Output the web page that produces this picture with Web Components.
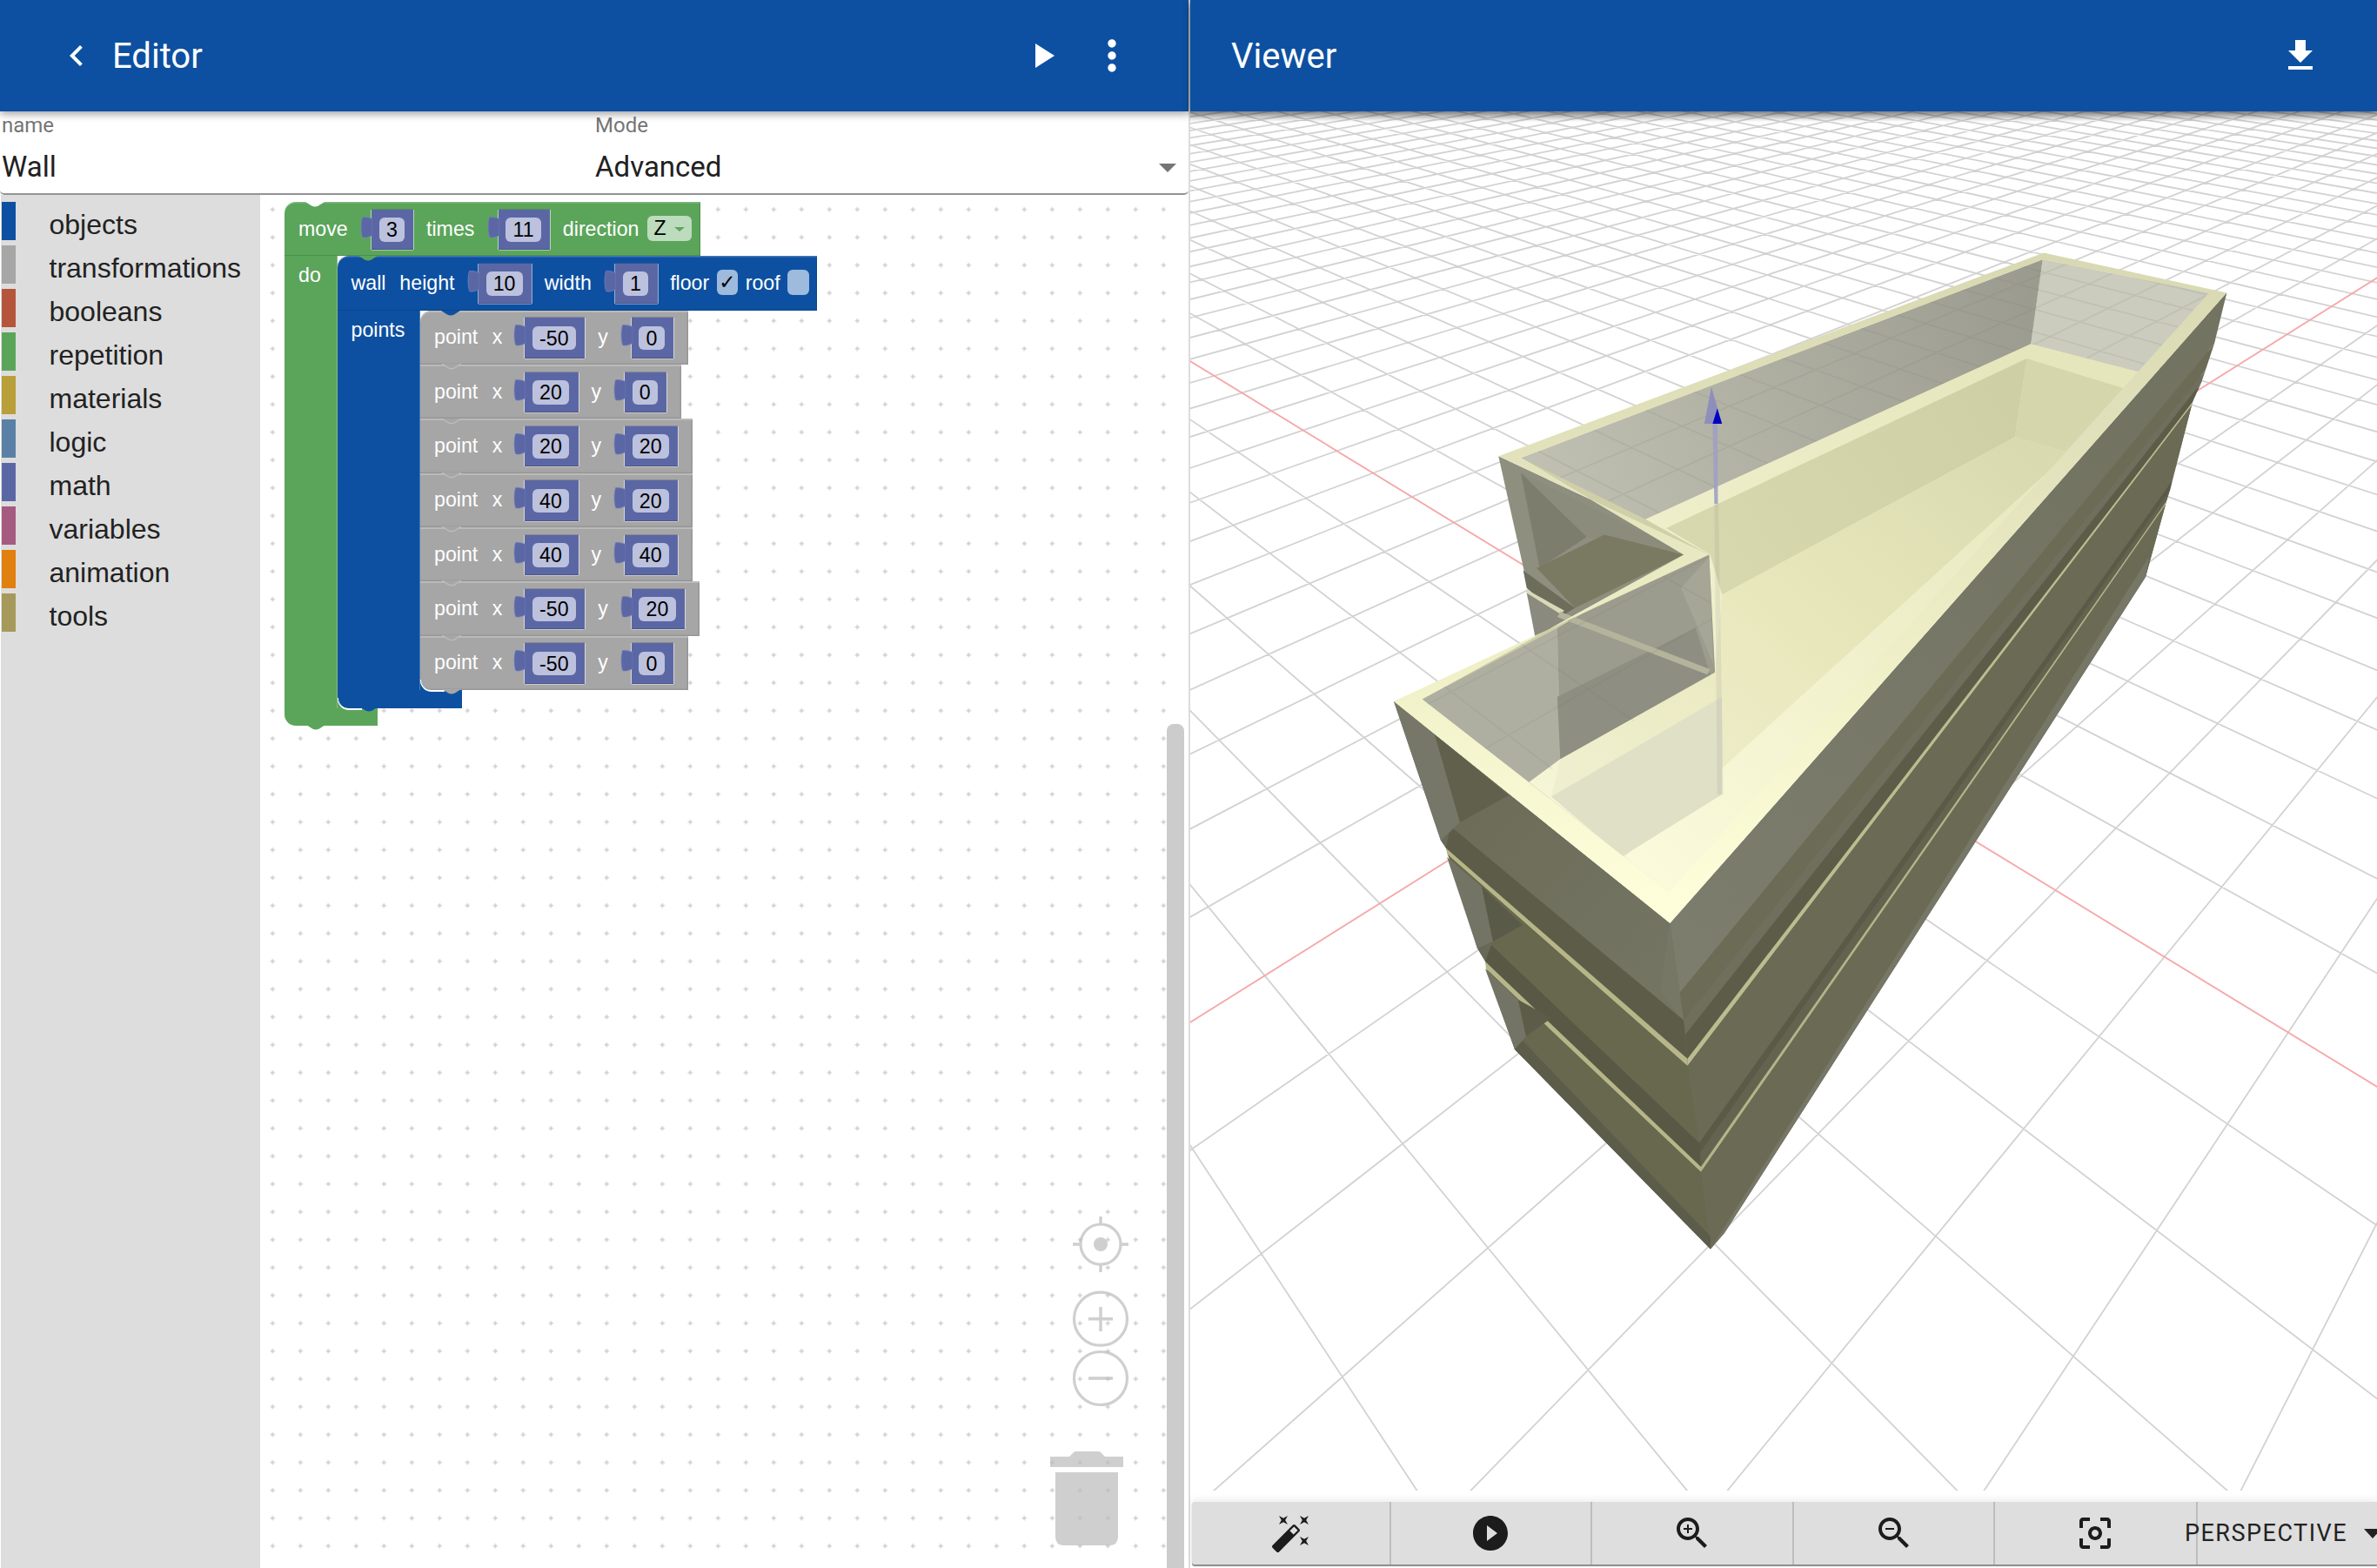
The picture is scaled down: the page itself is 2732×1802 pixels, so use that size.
<!DOCTYPE html>
<html lang="en">
<head>
<meta charset="utf-8">
<title>Editor / Viewer</title>
<style>
html,body{margin:0;padding:0;background:#fff;overflow:hidden}
body{width:2732px;height:1802px;font-family:Roboto,"Liberation Sans",sans-serif}
</style>
</head>
<body>
<app-shell>
  <editor-panel slot="left">
    <app-bar pad-left="64" pad-right="60">
      <ui-icon slot="lead" name="back" color="#fff" style="margin-right:17px"></ui-icon>
      Editor
      <ui-icon slot="actions" name="play" color="#fff" style="margin-right:28px"></ui-icon>
      <ui-icon slot="actions" name="more" size="56" color="#fff"></ui-icon>
    </app-bar>
    <form-bar>
      <form-field label="name" value="Wall"></form-field>
      <form-field label="Mode" value="Advanced" select></form-field>
    </form-bar>
    <work-area>
      <bk-toolbox slot="toolbox">
        <bk-cat color="#0d50a1">objects</bk-cat>
        <bk-cat color="#a6a6a6">transformations</bk-cat>
        <bk-cat color="#b5563c">booleans</bk-cat>
        <bk-cat color="#5ba55b">repetition</bk-cat>
        <bk-cat color="#b89f3a">materials</bk-cat>
        <bk-cat color="#5b80a5">logic</bk-cat>
        <bk-cat color="#5b67a5">math</bk-cat>
        <bk-cat color="#a55b80">variables</bk-cat>
        <bk-cat color="#e0800f">animation</bk-cat>
        <bk-cat color="#a59a5b">tools</bk-cat>
      </bk-toolbox>
      <bk-workspace slot="canvas">
        <bk-block color="#5ba55b" notch="#ffffff" labelw="60.5" footw="107" label="do" rounded>
          <bk-text slot="head">move</bk-text><bk-value slot="head">3</bk-value>
          <bk-text slot="head">times</bk-text><bk-value slot="head">11</bk-value>
          <bk-text slot="head">direction</bk-text><bk-drop slot="head">Z</bk-drop>
          <bk-block color="#0d50a1" notch="#5ba55b" labelw="95.5" footw="143.5" label="points" pad-right="9" rounded>
            <bk-text slot="head">wall</bk-text><bk-text slot="head" style="margin-left:1.4px">height</bk-text><bk-value slot="head">10</bk-value>
            <bk-text slot="head">width</bk-text><bk-value slot="head">1</bk-value>
            <bk-text slot="head">floor</bk-text><bk-check slot="head" checked></bk-check>
            <bk-text slot="head" style="margin-left:-6px">roof</bk-text><bk-check slot="head"></bk-check>
            <bk-point x="-50" y="0" notch="#0d50a1" first></bk-point>
            <bk-point x="20" y="0"></bk-point>
            <bk-point x="20" y="20"></bk-point>
            <bk-point x="40" y="20"></bk-point>
            <bk-point x="40" y="40"></bk-point>
            <bk-point x="-50" y="20"></bk-point>
            <bk-point x="-50" y="0" last></bk-point>
          </bk-block>
        </bk-block>
      </bk-workspace>
    </work-area>
  </editor-panel>
  <viewer-panel slot="right">
    <app-bar pad-left="47" pad-right="64">
      Viewer
      <ui-icon slot="actions" name="download" color="#fff"></ui-icon>
    </app-bar>
    <scene-view></scene-view>
    <view-toolbar>
      <ui-icon name="wand" color="#1c1c1c"></ui-icon>
      <ui-icon name="playc" color="#1c1c1c"></ui-icon>
      <ui-icon name="zoomin" color="#1c1c1c"></ui-icon>
      <ui-icon name="zoomout" color="#1c1c1c"></ui-icon>
      <ui-icon name="focus" color="#1c1c1c"></ui-icon>
      <span slot="select">PERSPECTIVE</span>
    </view-toolbar>
  </viewer-panel>
</app-shell>

<script>
const ICONS={
 back:'M15.41 7.41L14 6l-6 6 6 6 1.41-1.41L10.83 12z',
 play:'M8 5v14l11-7z',
 more:'M12 8c1.1 0 2-.9 2-2s-.9-2-2-2-2 .9-2 2 .9 2 2 2zm0 2c-1.1 0-2 .9-2 2s.9 2 2 2 2-.9 2-2-.9-2-2-2zm0 6c-1.1 0-2 .9-2 2s.9 2 2 2 2-.9 2-2-.9-2-2-2z',
 download:'M19 9h-4V3H9v6H5l7 7 7-7zM5 18v2h14v-2H5z',
 wand:'M7.5 5.6L10 7 8.6 4.5 10 2 7.5 3.4 5 2l1.4 2.5L5 7zm12 9.8L17 14l1.4 2.5L17 19l2.5-1.4L22 19l-1.4-2.5L22 14zM22 2l-2.5 1.4L17 2l1.4 2.5L17 7l2.5-1.4L22 7l-1.4-2.5zm-7.63 5.29c-.39-.39-1.02-.39-1.41 0L1.29 18.96c-.39.39-.39 1.02 0 1.41l2.34 2.34c.39.39 1.02.39 1.41 0L16.7 11.05c.39-.39.39-1.02 0-1.41l-2.33-2.35zm-1.03 5.49l-2.12-2.12 2.44-2.44 2.12 2.12-2.44 2.44z',
 playc:'M12 2C6.48 2 2 6.48 2 12s4.48 10 10 10 10-4.48 10-10S17.52 2 12 2zm-2 14.5v-9l6 4.5-6 4.5z',
 zoomin:'M15.5 14h-.79l-.28-.27C15.41 12.59 16 11.11 16 9.5 16 5.91 13.09 3 9.5 3S3 5.91 3 9.5 5.91 16 9.5 16c1.61 0 3.09-.59 4.23-1.57l.27.28v.79l5 4.99L20.49 19l-4.99-5zm-6 0C7.01 14 5 11.99 5 9.5S7.01 5 9.5 5 14 7.01 14 9.5 11.99 14 9.5 14zM12 10h-2v2H9v-2H7V9h2V7h1v2h2v1z',
 zoomout:'M15.5 14h-.79l-.28-.27C15.41 12.59 16 11.11 16 9.5 16 5.91 13.09 3 9.5 3S3 5.91 3 9.5 5.91 16 9.5 16c1.61 0 3.09-.59 4.23-1.57l.27.28v.79l5 4.99L20.49 19l-4.99-5zm-6 0C7.01 14 5 11.99 5 9.5S7.01 5 9.5 5 14 7.01 14 9.5 11.99 14 9.5 14zM7 9h5v1H7z',
 focus:'M5 15H3v4c0 1.1.9 2 2 2h4v-2H5v-4zM5 5h4V3H5c-1.1 0-2 .9-2 2v4h2V5zm14-2h-4v2h4v4h2V5c0-1.1-.9-2-2-2zm0 16h-4v2h4c1.1 0 2-.9 2-2v-4h-2v4zM12 8c-2.21 0-4 1.79-4 4s1.79 4 4 4 4-1.79 4-4-1.79-4-4-4zm0 6c-1.1 0-2-.9-2-2s.9-2 2-2 2 .9 2 2-.9 2-2 2z'
};
const def=(name,html,extra)=>{
  customElements.define(name,class extends HTMLElement{
    constructor(){super();this.attachShadow({mode:'open'});}
    connectedCallback(){
      const h=typeof html==='function'?html(this):html;
      this.shadowRoot.innerHTML=h;
      if(extra)extra(this);
    }
  });
};
const A=(el,n,d='')=>el.hasAttribute(n)?el.getAttribute(n):d;
const BF='"Liberation Sans",Arial,sans-serif';

def('ui-icon',el=>{const s=A(el,'size','48');return `<style>:host{display:block;width:${s}px;height:${s}px;flex:none}svg{display:block;width:100%;height:100%}</style>
<svg viewBox="0 0 24 24"><path fill="${A(el,'color','#000')}" d="${ICONS[A(el,'name')]}"/></svg>`});

def('app-shell',`<style>:host{display:grid;grid-template-columns:1366px 1366px;height:1802px;overflow:hidden}</style><slot name="left"></slot><slot name="right"></slot>`);

def('editor-panel',`<style>:host{display:flex;flex-direction:column;height:1802px;min-width:0;position:relative}</style><slot></slot>`);

def('viewer-panel',`<style>:host{display:flex;flex-direction:column;height:1802px;min-width:0;position:relative;box-sizing:border-box;border-left:2px solid #dcdcdc}</style><slot></slot>`);

def('app-bar',el=>`<style>:host{display:flex;align-items:center;height:128px;flex:none;background:#0d50a1;color:#fff;position:relative;z-index:5;
 box-shadow:0 3px 9px rgba(0,0,0,.38);padding-left:${A(el,'pad-left')}px;padding-right:${A(el,'pad-right')}px;font:400 40px Roboto,sans-serif;box-sizing:border-box}
 .t{flex:1;white-space:nowrap}.lead,.act{display:flex;align-items:center}</style>
 <div class="lead"><slot name="lead"></slot></div><div class="t"><slot></slot></div><div class="act"><slot name="actions"></slot></div>`);

def('form-bar',`<style>:host{display:grid;grid-template-columns:682px 1fr;height:96px;flex:none;box-sizing:border-box;background:#fff;border-bottom:2px solid #949494;border-radius:0 0 5px 5px;padding-left:2px;position:relative;z-index:1}</style><slot></slot>`);

def('form-field',el=>`<style>:host{display:block;position:relative;padding-top:2px}
 .l{font:400 24px/28px Roboto,sans-serif;color:#757575}
 .v{font:400 33px/38px Roboto,sans-serif;color:#212121;margin-top:15px}
 svg{position:absolute;left:648px;top:60px;width:20px;height:10px}</style>
 <div class="l">${A(el,'label')}</div><div class="v">${A(el,'value')}</div>
 ${el.hasAttribute('select')?'<svg viewBox="0 0 20 10"><path d="M0 0h20L10 10z" fill="#757575"/></svg>':''}`);

def('work-area',`<style>:host{display:flex;flex:1;min-height:0}</style><slot name="toolbox"></slot><slot name="canvas"></slot>`);

def('bk-toolbox',`<style>:host{display:flex;flex-direction:column;width:298px;margin-left:1px;flex:none;background:#ddd;padding-top:8px;box-sizing:border-box}</style><slot></slot>`);

def('bk-cat',el=>`<style>:host{display:flex;align-items:flex-start;height:44px;margin-bottom:6px;padding-left:1px;font:400 32px/44px ${BF};color:#222}
 i{display:block;width:16px;height:44px;background:${A(el,'color')};margin-right:38.5px}
 span{display:block;padding-top:4px;white-space:nowrap}</style><i></i><span><slot></slot></span>`);

def('bk-workspace',`<style>:host{display:block;flex:1;position:relative;background:#fff;overflow:hidden;margin-top:1px}
 .dots{position:absolute;left:0;top:0;width:100%;height:100%}
 .root{position:absolute;left:28px;top:7px}
 .bar{position:absolute;left:1042px;top:607px;bottom:0;width:20px;background:#ccc;border-radius:8px 8px 0 0}
 .ctl{position:absolute;left:900px;top:1169px;width:100px;height:390px}</style>
 <svg class="dots"><defs><pattern id="d" width="32" height="32" patternUnits="userSpaceOnUse" x="-1.7" y="-0.3"><path d="M13.4 16h5.2M16 13.4v5.2" stroke="#cdcdcd" stroke-width="1.6" fill="none"/></pattern></defs><rect width="100%" height="100%" fill="url(#d)"/></svg>
 <div class="root"><slot></slot></div>
 <div class="bar"></div>
 <svg class="ctl" viewBox="1200 1394 100 390"><g opacity=".72" fill="none" stroke="#bdbdbd">
   <circle cx="1266" cy="1430" r="23" stroke-width="3.2"/><circle cx="1266" cy="1430" r="8" fill="#bdbdbd" stroke="none"/>
   <path d="M1266 1398v8M1266 1454v8M1234 1430h8M1290 1430h8" stroke-width="3.4"/>
   <circle cx="1266" cy="1515.7" r="30.5" stroke-width="3.2"/><path d="M1252 1515.7h28M1266 1502v28" stroke-width="3.4"/>
   <circle cx="1266" cy="1584" r="30.5" stroke-width="3.2"/><path d="M1252 1584h28" stroke-width="3.6"/>
   <path d="M1208 1674h22l5-5q1-1 3-1h25q2 0 3 1l5 5h21v12h-84z" fill="#bdbdbd" stroke="none"/>
   <path d="M1214 1692h72v74q0 10-10 10h-52q-10 0-10-10z" fill="#bdbdbd" stroke="none"/>
 </g></svg>`);

const NOTCH='M0 0L7.5 4.8Q11 6.4 14.5 4.8L22 0z';
def('bk-block',el=>{
 const c=A(el,'color'),lw=A(el,'labelw'),fw=A(el,'footw'),pr=A(el,'pad-right','10');
 const hasBody=!!lw;
 return `<style>
 :host{display:block;position:relative;width:max-content;--c:${c}}
 .head{display:flex;width:max-content;box-sizing:border-box;height:62.33px;background:var(--c);padding:8.7px ${pr}px 0 16px;gap:14.5px;
   box-shadow:inset 0 1.5px 0 rgba(255,255,255,.22),inset -1px -1px 0 rgba(0,0,0,.14);${el.hasAttribute('rounded')?'border-top-left-radius:13px;':''}}
 .mid{display:flex;position:relative}
 .label{width:${lw}px;flex:none;box-sizing:border-box;background:var(--c);padding-left:16px;font:400 23.2px/44px ${BF};color:#fff;box-shadow:inset -1px 0 0 rgba(255,255,255,.25)}
 .inner{position:absolute;left:${lw}px;bottom:0;width:16px;height:16px;background:var(--c)}
 .sliver{position:absolute;left:${lw}px;bottom:-2.5px;width:28px;height:14px;box-sizing:border-box;border-bottom:2.5px solid #fff;border-left:1px solid #fff;border-radius:0 0 0 13px;z-index:1}
 .foot{width:${fw}px;height:20.7px;background:var(--c);border-bottom-left-radius:13px}
 .notch{position:absolute;left:24px;top:0;width:22px;height:8px}
 .tab{position:absolute;left:25px;bottom:-6.4px;width:22px;height:8px;z-index:2}
 </style>
 <svg class="notch" viewBox="0 0 22 8"><path d="${NOTCH}" fill="${A(el,'notch','#fff')}"/></svg>
 <div class="head"><slot name="head"></slot></div>
 ${hasBody?`<div class="mid"><div class="label">${A(el,'label')}</div><div class="inner"></div><div class="body"><slot></slot></div><div class="sliver"></div></div><div class="foot"></div>`:''}
 <svg class="tab" viewBox="0 0 22 8"><path d="${NOTCH}" fill="${c}"/></svg>`;
});

def('bk-point',el=>{
 const first=el.hasAttribute('first'),last=el.hasAttribute('last');
 return `<style>
 :host{display:block;position:relative;width:max-content}
 .head{display:flex;width:max-content;box-sizing:border-box;height:62.33px;background:#a6a6a6;padding:8.7px 17px 0 16px;gap:14.5px;
  box-shadow:inset 0 2px 0 #bababa,inset -1.5px -1.5px 0 #969696;${first?'border-top-left-radius:13px;':''}${last?'border-bottom-left-radius:13px;':''}}
 .notch{position:absolute;left:24px;top:0;width:22px;height:8px}
 .tab{position:absolute;left:24px;bottom:-7.2px;width:24px;height:9px;z-index:2}
 </style>
 ${first?`<svg class="notch" viewBox="0 0 22 8"><path d="${NOTCH}" fill="${A(el,'notch','#fff')}"/></svg>`:''}
 <div class="head">
  <bk-text>point</bk-text><bk-text style="margin-left:2px;margin-right:-1.5px">x</bk-text><bk-value>${A(el,'x')}</bk-value>
  <bk-text style="margin-left:.5px;margin-right:-.5px">y</bk-text><bk-value>${A(el,'y')}</bk-value>
 </div>
 <svg class="tab" viewBox="-1 -1 24 9"><path d="M0 0L7.5 4.8Q11 6.4 14.5 4.8L22 0" fill="#a6a6a6" stroke="#bcbcbc" stroke-width="${last?0:1.4}"/></svg>`;
});

def('bk-text',`<style>:host{display:block;font:400 23.2px/44px ${BF};color:#fff;white-space:nowrap;height:46px}</style><slot></slot>`);

def('bk-value',`<style>:host{display:flex;height:46.3px;position:relative;flex:none}
 .tab{display:block;width:14px;height:28px;margin-top:7px;margin-right:-1px;position:relative}
 .box{display:flex;align-items:center;box-sizing:border-box;height:46.3px;background:#5b67a5;padding:0 10.5px 0 8.5px;
   box-shadow:0 -1px 0 rgba(90,90,110,.35),1px 0 0 rgba(255,255,255,.55),0 1px 0 rgba(255,255,255,.4),-1px 0 0 rgba(255,255,255,.55),inset 0 -1px 0 rgba(0,0,0,.16)}
 .f{min-width:12px;height:27.4px;border-radius:6px;background:#bcc1dd;color:#000;padding:0 8.2px;font:400 23.2px/28.4px ${BF};text-align:center;white-space:nowrap}</style>
 <svg class="tab" viewBox="0 0 14 28"><path d="M14 3.5C10 2 5 1 2.5 1.5C.5 8 .5 18 2.5 24.5C5 26 10 24.5 14 22.5z" fill="#5b67a5" stroke="rgba(120,130,190,.85)" stroke-width=".8"/></svg>
 <div class="box"><div class="f"><slot></slot></div></div>`);

def('bk-drop',`<style>:host{display:flex;align-items:center;height:29px;width:51px;margin-left:-5.5px;box-sizing:border-box;padding-left:8px;border-radius:6px;background:#bddcbd;color:#000;font:400 23.2px/29px ${BF};position:relative;top:7.3px}
 svg{position:absolute;left:31px;top:12.7px;width:12px;height:5px}</style><slot></slot><svg viewBox="0 0 12 5"><path d="M0 0h12L6 5z" fill="#5ba55b"/></svg>`);

def('bk-check',el=>`<style>:host{display:flex;align-items:center;justify-content:center;width:24.5px;height:29px;margin-left:-6px;border-radius:6px;background:#9ebadd;color:#000;font:400 23px/29px "DejaVu Sans",sans-serif;position:relative;top:7px}</style>${el.hasAttribute('checked')?'✓':''}`);

def('view-toolbar',`<style>:host{display:flex;height:72px;flex:none;margin:0 0 4px 2px;background:#dedede;box-shadow:0 2px 1px #8a8a8a,0 -3px 8px rgba(0,0,0,.07);border-radius:3px 0 0 3px;overflow:hidden}
 .sel{flex:1;display:flex;align-items:center;position:relative;border-left:2px solid #bdbdbd;box-sizing:border-box;min-width:0}
 .lab{font:400 27px/1 Roboto,sans-serif;letter-spacing:1.5px;color:#222;margin-left:-15px;white-space:nowrap}
 svg{position:absolute;left:191px;top:31px;width:20px;height:11px}
 .cells{display:grid;grid-template-columns:227.6px repeat(4,231.6px);background-image:linear-gradient(#bdbdbd,#bdbdbd),linear-gradient(#bdbdbd,#bdbdbd),linear-gradient(#bdbdbd,#bdbdbd),linear-gradient(#bdbdbd,#bdbdbd);background-repeat:no-repeat;background-size:2px 100%;background-position:226.6px 0,458.2px 0,689.8px 0,921.4px 0}
 ::slotted(ui-icon){justify-self:center;align-self:center}
 </style>
 <div class="cells"><slot></slot></div>
 <div class="sel"><span class="lab"><slot name="select"></slot></span><svg viewBox="0 0 20 11"><path d="M0 0h20L10 11z" fill="#222"/></svg></div>`);

/* ---------- 3D scene ---------- */
const O=[1981.4,790.1],VA=[378,-190],VB=[3544,-190],a=.048,b=.0505;
const proj=(u,v)=>{const w=1+a*u+b*v;return[(O[0]+a*u*VA[0]+b*v*VB[0])/w,(O[1]+a*u*VA[1]+b*v*VB[1])/w]};
function gridPaths(){
  let d='',red='';
  const W0=.28;
  const seg=(fix,isU)=>{
    const k=isU?a*fix:b*fix, m=isU?b:a;
    let lo=(W0-1-k)/m, hi=(4.6-1-k)/m;
    if(hi<=lo)return null;
    const p=isU?proj(fix,lo):proj(lo,fix), q=isU?proj(fix,hi):proj(hi,fix);
    return `M${p[0].toFixed(1)} ${p[1].toFixed(1)}L${q[0].toFixed(1)} ${q[1].toFixed(1)}`;
  };
  for(let i=-90;i<=90;i++){
    const s1=seg(i,true),s2=seg(i,false);
    if(i===0){red=(s1||'')+(s2||'');continue;}
    if(s1)d+=s1; if(s2)d+=s2;
  }
  return {d,red};
}
const z6=(x,y)=>[1560+x/1.479,260+y/1.96];
const pg=(fill,pts,extra='')=>`<polygon fill="${fill}" points="${pts.map(p=>p[0].toFixed(1)+','+p[1].toFixed(1)).join(' ')}" ${extra}/>`;
const zz=(...n)=>{const o=[];for(let i=0;i<n.length;i+=2)o.push(z6(n[i],n[i+1]));return o};

function building(g){
  const N=[[1919.4,1061],[1930.5,1141],[1935,1172.5],[1937,1189],[1939.5,1216.7],[1939.5,1225],[1953,1313.5],[1953,1326],[1955,1341],[1955,1347],[1966,1435.5]];
  const F=[[2559.3,336.5],[2545,395],[2535,425],[2530,440],[2520,462],[2519,466],[2497,552],[2494,564],[2490,576],[2489,580],[2466,663]];
  const L=[[1602,806],[1667,949.4],[1662,962],[1662,974.7],[1663.6,982],[1714,1086],[1712,1099],[1707,1105],[1708,1113.5],[1747.5,1193.5],[1741,1206]];
  const band=(i,j,c)=>pg(c,[N[i],F[i],F[j],N[j]]);
  let s='';
  s+=pg('#69695a',[L[0],[1656,966],[1662,975],[1698,1090],[1707,1105],L[10],N[10],[1982,1417],F[10],F[8],F[4],F[0],N[0]]);
  // right side
  s+=band(0,1,'url(#rb)')+band(1,2,'#6c6c56')+band(2,3,'#6f6f5e')+band(3,4,'#5c5c49')+band(4,5,'#bcbc90');
  s+=band(5,6,'#6b6b55')+band(6,7,'#5a5a47')+band(7,8,'#636350')+band(8,9,'#b4b488')+band(9,10,'#6b6b55');
  s+=pg('#777768',[N[10],[1982,1417],F[10],[2470,640]]);
  // left front side
  s+=pg('url(#lb)',[L[0],N[0],N[2],L[1]]);
  s+=pg('#797967',[N[0],N[1],N[2],[1908,1140]],'opacity=".7"');
  s+=pg('#5c5c48',[L[1],N[2],N[4],L[3]]);
  s+=pg('#b6b688',[L[3],N[4],N[5],L[4]]);
  s+=pg('#68684f',[L[4],N[5],N[6],L[5]]);
  s+=pg('#585845',[L[5],N[6],N[8],L[7]]);
  s+=pg('#b6b688',[L[7],N[8],N[9],L[8]]);
  s+=pg('#68684f',[L[8],N[9],N[10],L[10]]);
  s+=pg('#5c5c4a',[L[9],[1966,1421],N[10],L[10]]);
  // end walls
  s+=pg('#777769',[L[0],[1656,966],[1678,945],[1649,844]]);
  s+=pg('#60604d',[[1649,844],[1678,945],[1734,914]]);
  s+=pg('#747466',[[1663,985],[1698,1090],[1716,1082],[1703,1019]]);
  s+=pg('#5a5a48',[[1703,1019],[1716,1082],[1750,1063]]);
  s+=pg('#747466',[[1707,1113.5],[1741,1206],[1754,1191],[1745,1149]]);
  s+=pg('#5c5c49',[[1745,1149],[1754,1191],[1783,1170]]);

  // left wing wall seen under the back rim
  s+=pg('#8f8f80',zz(240,518,598,740,345,895,290,815));
  s+=pg('#7d7d6e',zz(278,555,390,700,310,770));
  s+=pg('#8c8c7d',zz(278,555,555,735,390,700));
  s+=pg('#7a7a62',zz(305,770,420,695,555,740,370,860));
  s+=pg('#6d6d5c',zz(282,775,370,860,345,880,288,815));
  s+=pg('#8a8a7e',zz(288,825,350,870,345,905,303,930));
  s+=pg('#d9d9b6',zz(287,818,352,866,345,873,288,826));

  // inner fill, top
  const IN=zz(110,1065,555,740,278,522,1165,75,1448,150,530,1500);
  s+=pg('#d0d0a8',IN);
  const BW=zz(278,522,1165,75,1145,265,490,660), RW=zz(1165,75,1448,150,1335,330,1145,265);
  s+=pg('url(#bw)',BW)+pg('#cbcbbe',RW);
  s+=`<path d="${g.d}" fill="none" stroke="#77776a" stroke-width="1.6" opacity=".14" clip-path="url(#cw)"/>`;
  // level 2 deck
  s+=pg('url(#dk)',zz(490,660,1145,265,1335,330,530,1500,292,1252,345,1200,608,1005,598,740));
  s+=pg('url(#wl)',zz(525,680,1138,298,1118,475,620,830,600,740));
  s+=pg('#d6d6ad',zz(1138,298,1310,368,1210,510,1118,475));
  s+=pg('url(#fl)',zz(620,830,1118,475,1210,510,455,1420,330,1285,345,1200,608,1005));
  s+=pg('url(#st)',zz(1335,330,530,1500,455,1420,1210,510));
  s+=pg('#e0e0c6',zz(330,1285,620,1060,620,1280,450,1420));
  // notch glass
  s+=pg('#afafa1',zz(110,1065,340,905,345,1200,292,1252));
  s+=pg('#9b9b8e',zz(340,905,555,740,598,740,608,1005,345,1200));
  s+=pg('#a6a697',zz(550,815,598,745,605,985));
  s+=pg('#8e8e82',zz(340,1060,575,905,600,1010,345,1200));
  s+=pg('#b4b49c',zz(345,868,600,998,595,1010,340,880));
  s+=`<path d="${g.d}" fill="none" stroke="#77776a" stroke-width="1.6" opacity=".12" clip-path="url(#cn)"/>`;
  s+=`<clipPath id="cw">${pg('#000',BW)}${pg('#000',RW)}</clipPath><clipPath id="cn">${pg('#000',zz(110,1065,555,740,598,740,608,1005,292,1252))}</clipPath>`;
  // rim
  const rim=[...zz(62,1070),N[0],...zz(1478,150,1167,60,240,518,598,740)];
  const path=(arr)=>'M'+arr.map(p=>p[0].toFixed(1)+' '+p[1].toFixed(1)).join('L')+'z';
  s+=`<path fill-rule="evenodd" fill="url(#rm)" d="${path(rim)}${path(IN)}"/>`;
  // axis arrow
  s+=pg('#9f9fc4',[...zz(604,440,612,440,613,625,607,625)],'opacity=".9"');
  s+=pg('#8e8ebc',zz(602,362,590,445,620,445));
  s+=pg('#0000c0',zz(612,410,604,445,620,445));
  s+=pg('#8a8a90',zz(607,625,614,625,622,1280,612,1280),'opacity=".14"');
  return s;
}
def('scene-view',el=>{
  const g=gridPaths();
  return `<style>:host{display:block;height:1585px;flex:none;background:#fff;position:relative;overflow:hidden;margin-bottom:13px}
   svg{display:block;width:1364px;height:1585px}
   .sh{position:absolute;left:0;top:0;width:100%;height:12px;background:linear-gradient(rgba(0,0,0,.28),rgba(0,0,0,0))}</style>
  <svg viewBox="1368 128 1364 1585" xmlns="http://www.w3.org/2000/svg">
   <defs>
    <linearGradient id="rm" gradientUnits="userSpaceOnUse" x1="1900" y1="290" x2="1900" y2="1061"><stop offset="0" stop-color="#d8d8b2"/><stop offset=".35" stop-color="#e3e3bd"/><stop offset=".62" stop-color="#f0f0c8"/><stop offset="1" stop-color="#ffffdc"/></linearGradient>
    <linearGradient id="bw" gradientUnits="userSpaceOnUse" x1="1748" y1="526" x2="2340" y2="300"><stop offset="0" stop-color="#c0c0b3"/><stop offset="1" stop-color="#9a9a8e"/></linearGradient>
    <linearGradient id="wl" gradientUnits="userSpaceOnUse" x1="2300" y1="420" x2="1960" y2="650"><stop offset="0" stop-color="#cfcfa5"/><stop offset="1" stop-color="#d8d8ae"/></linearGradient>
    <linearGradient id="dk" gradientUnits="userSpaceOnUse" x1="2300" y1="400" x2="1900" y2="1030"><stop offset="0" stop-color="#e6e6bd"/><stop offset="1" stop-color="#f6f6d8"/></linearGradient>
    <linearGradient id="fl" gradientUnits="userSpaceOnUse" x1="2300" y1="500" x2="1880" y2="960"><stop offset="0" stop-color="#dadab0"/><stop offset=".55" stop-color="#e9e8bd"/><stop offset="1" stop-color="#efefcf"/></linearGradient>
    <linearGradient id="st" gradientUnits="userSpaceOnUse" x1="2460" y1="480" x2="1900" y2="1030"><stop offset="0" stop-color="#e4e4ba"/><stop offset="1" stop-color="#fbfbdc"/></linearGradient>
    <linearGradient id="rb" gradientUnits="userSpaceOnUse" x1="2400" y1="500" x2="1920" y2="1100"><stop offset="0" stop-color="#737362"/><stop offset="1" stop-color="#7d7d6e"/></linearGradient>
    <linearGradient id="lb" gradientUnits="userSpaceOnUse" x1="1680" y1="880" x2="1920" y2="1100"><stop offset="0" stop-color="#6b6b57"/><stop offset="1" stop-color="#747463"/></linearGradient>
   </defs>
   <rect x="1368" y="128" width="1364" height="1585" fill="#fff"/>
   <path d="${g.d}" fill="none" stroke="#d2d2d2" stroke-width="1.8"/>
   <path d="${g.red}" fill="none" stroke="#f7a9a9" stroke-width="1.9"/>
   ${building(g)}
  </svg><div class="sh"></div>`;
});
</script>
</body>
</html>
